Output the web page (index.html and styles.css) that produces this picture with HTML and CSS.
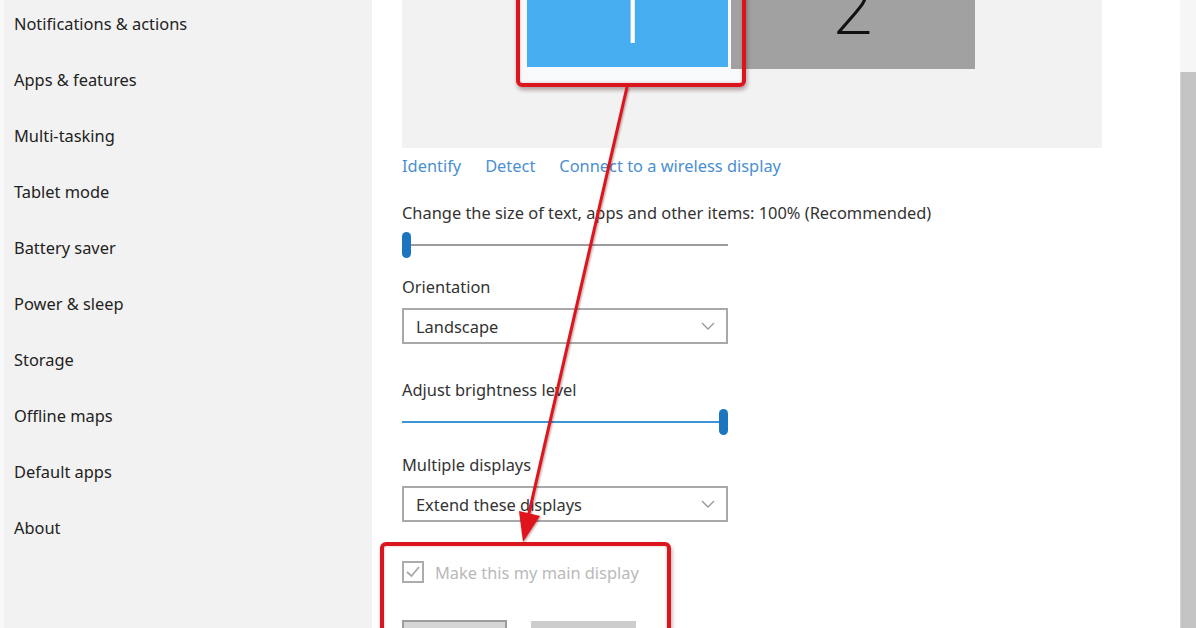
FILE: index.html
```html
<!DOCTYPE html>
<html>
<head>
<meta charset="utf-8">
<link rel="stylesheet" href="styles.css">
</head>
<body>
<div class="app">
  <nav class="sidebar">
    <div class="nav-item">Notifications &amp; actions</div>
    <div class="nav-item">Apps &amp; features</div>
    <div class="nav-item">Multi-tasking</div>
    <div class="nav-item">Tablet mode</div>
    <div class="nav-item">Battery saver</div>
    <div class="nav-item">Power &amp; sleep</div>
    <div class="nav-item">Storage</div>
    <div class="nav-item">Offline maps</div>
    <div class="nav-item">Default apps</div>
    <div class="nav-item">About</div>
  </nav>
  <main class="main">
    <div class="preview">
      <div class="sel-frame"></div>
      <div class="monitor monitor-2"><span class="digit digit-2">2</span></div>
      <div class="monitor monitor-1"><span class="digit digit-1">1</span></div>
    </div>
    <div class="links">
      <span class="link">Identify</span>
      <span class="link">Detect</span>
      <span class="link">Connect to a wireless display</span>
    </div>
    <div class="label label-scale">Change the size of text, apps and other items: 100% (Recommended)</div>
    <div class="slider slider-scale"><div class="track"></div><div class="thumb"></div></div>
    <div class="label label-orient">Orientation</div>
    <div class="select"><span>Landscape</span><svg class="chev" width="14" height="8" viewBox="0 0 14 8"><path d="M1 1 L7 7 L13 1" fill="none" stroke="#9a9a9a" stroke-width="1.4"/></svg></div>
    <div class="label label-bright">Adjust brightness level</div>
    <div class="slider slider-bright"><div class="track"></div><div class="thumb"></div></div>
    <div class="label label-multi">Multiple displays</div>
    <div class="select"><span>Extend these displays</span><svg class="chev" width="14" height="8" viewBox="0 0 14 8"><path d="M1 1 L7 7 L13 1" fill="none" stroke="#9a9a9a" stroke-width="1.4"/></svg></div>
    <div class="check-row">
      <span class="checkbox"><svg width="18" height="18" viewBox="0 0 18 18"><path d="M3 9 L7.5 13 L15 4" fill="none" stroke="#a8a8a8" stroke-width="1.8"/></svg></span>
      <span class="check-label">Make this my main display</span>
    </div>
    <div class="buttons">
      <div class="btn btn-apply"></div>
      <div class="btn btn-cancel"></div>
    </div>
  </main>
  <div class="scrollbar"><div class="scroll-top"></div><div class="scroll-thumb"></div></div>
</div>
<div class="callout callout-top"></div>
<div class="callout callout-bottom"></div>
<svg class="arrow" width="1196" height="628" viewBox="0 0 1196 628">
  <line x1="627" y1="87" x2="526" y2="526" stroke="#e0141c" stroke-width="3"/>
  <polygon points="523,542 540,516 519,511" fill="#e0141c"/>
</svg>
</body>
</html>
```
FILE: styles.css
```css
* { box-sizing: border-box; }
html, body { margin: 0; padding: 0; }
body {
  width: 1196px;
  height: 628px;
  overflow: hidden;
  background: #fff;
  font-family: "Noto Sans", "Open Sans", sans-serif;
  font-size: 16.4px;
  color: #2b2b2b;
  position: relative;
}
.app {
  display: flex;
  height: 628px;
}
.sidebar {
  width: 372px;
  flex: none;
  background: #f2f2f2;
  border-left: 4px solid #f8f8f8;
}
.nav-item {
  padding: 13px 10px 21px;
  line-height: 22px;
  height: 56px;
  color: #222;
}
.main {
  flex: 1;
  padding-left: 30px;
  min-width: 0;
}
.preview {
  width: 700px;
  height: 148px;
  background: #f2f2f2;
  position: relative;
  overflow: hidden;
}
.sel-frame {
  position: absolute;
  left: 118px;
  top: 0;
  width: 224px;
  height: 83px;
  background: #f7f9fb;
}
.monitor {
  position: absolute;
  top: 0;
  overflow: hidden;
}
.monitor-1 {
  left: 125px;
  width: 201px;
  height: 67px;
  background: #45adf0;
}
.monitor-2 {
  left: 329px;
  width: 244px;
  height: 69px;
  background: #a1a1a1;
}
.digit {
  position: absolute;
  font-family: "Inter", "DejaVu Sans", sans-serif;
  font-weight: 200;
  font-size: 72px;
  line-height: 1;
}
.digit-1 { color: #fff; left: 83px; top: -34px; font-size: 90px; font-weight: 200; }
.digit-2 { color: #111; left: 100px; top: -28px; }
.links {
  margin-top: 7px;
  line-height: 22px;
  display: flex;
  gap: 24px;
}
.link { color: #4a8fd0; }
.label {
  line-height: 22px;
  color: #333;
}
.label-scale { margin-top: 25px; }
.slider {
  position: relative;
  width: 326px;
  height: 26px;
  margin-top: 8px;
}
.slider .track {
  position: absolute;
  left: 0;
  right: 0;
  top: 12px;
  height: 2px;
}
.slider .thumb {
  position: absolute;
  top: 0;
  width: 9px;
  height: 26px;
  border-radius: 5px;
  background: #1c76bf;
}
.slider-scale .track { background: #9c9c9c; }
.slider-scale .thumb { left: 0; }
.slider-bright .track { background: #3e95d5; right: 4px; }
.slider-bright .thumb { left: 317px; }
.label-orient { margin-top: 18px; }
.label-bright { margin-top: 35px; }
.label-multi { margin-top: 19px; }
.select {
  margin-top: 10px;
  width: 326px;
  height: 36px;
  border: 2px solid #a9a9a9;
  display: flex;
  align-items: center;
  justify-content: space-between;
  padding: 0 11px 0 12px;
  color: #333;
}
.check-row {
  margin-top: 38px;
  display: flex;
  align-items: center;
  gap: 11px;
  height: 24px;
}
.checkbox {
  width: 22px;
  height: 22px;
  border: 2px solid #acacac;
  display: flex;
  align-items: center;
  justify-content: center;
}
.check-label { color: #b9b9b9; }
.buttons {
  margin-top: 36px;
  display: flex;
  gap: 24px;
}
.btn {
  width: 105px;
  height: 40px;
}
.btn-apply { border: 2px solid #9c9c9c; background: #d6d6d6; }
.btn-cancel { background: #cdcdcd; margin-top: 1px; }
.scrollbar {
  width: 16px;
  flex: none;
  display: flex;
  flex-direction: column;
}
.scroll-top { height: 72px; background: #f6f6f6; }
.scroll-thumb { flex: 1; background: #c3c3c3; border-left: 1px solid #d6d6d6; }
.callout {
  position: absolute;
  border: 4px solid #da151d;
  border-radius: 6px;
  box-shadow: 1px 3px 4px rgba(60, 0, 0, 0.35), inset 0 0 3px rgba(120, 0, 0, 0.25);
}
.callout-top {
  left: 516px;
  top: -12px;
  width: 230px;
  height: 99px;
}
.callout-bottom {
  left: 380px;
  top: 542px;
  width: 291px;
  height: 120px;
}
.arrow {
  position: absolute;
  left: 0;
  top: 0;
  pointer-events: none;
  filter: drop-shadow(1px 1px 1px rgba(80, 0, 0, 0.4));
}
```
